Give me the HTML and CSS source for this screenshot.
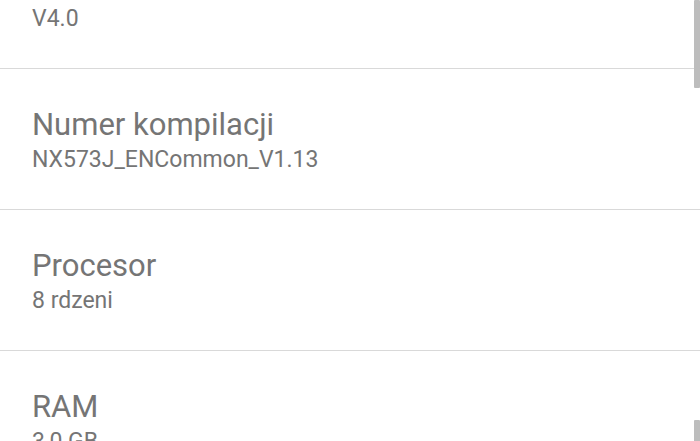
FILE: index.html
```html
<!DOCTYPE html>
<html lang="pl">
<head>
<meta charset="utf-8">
<title>Informacje o telefonie</title>
<link rel="stylesheet" href="styles.css">
</head>
<body>
<div class="screen">
  <ul class="list">
    <li class="item">
      <div class="title">Wersja nubia UI</div>
      <div class="summary">V4.0</div>
    </li>
    <li class="item">
      <div class="title">Numer kompilacji</div>
      <div class="summary">NX573J_ENCommon_V1.13</div>
    </li>
    <li class="item">
      <div class="title">Procesor</div>
      <div class="summary">8 rdzeni</div>
    </li>
    <li class="item">
      <div class="title">RAM</div>
      <div class="summary">3,0 GB</div>
    </li>
  </ul>
  <div class="scrollbar top"></div>
  <div class="scrollbar bottom"></div>
</div>
</body>
</html>
```

FILE: styles.css
```css
html, body {
  margin: 0;
  padding: 0;
  background: #ffffff;
}
.screen {
  position: relative;
  width: 700px;
  height: 441px;
  overflow: hidden;
  background: #ffffff;
  font-family: Roboto, "Noto Sans", sans-serif;
}
.list {
  list-style: none;
  margin: -72px 0 0 0;
  padding: 0;
}
.item {
  padding: 38px 32px 35px 32px;
  border-bottom: 1px solid #d9d9d9;
}
.title {
  font-size: 31px;
  line-height: 36px;
  color: #757575;
}
.summary {
  margin-top: 3px;
  font-size: 23px;
  line-height: 28px;
  color: #757575;
}
.scrollbar {
  position: absolute;
  right: 0;
  width: 6px;
  background: #bdbdbd;
  border-radius: 1px;
}
.scrollbar.top {
  top: 0;
  height: 88px;
}
.scrollbar.bottom {
  top: 420px;
  height: 30px;
}
```
